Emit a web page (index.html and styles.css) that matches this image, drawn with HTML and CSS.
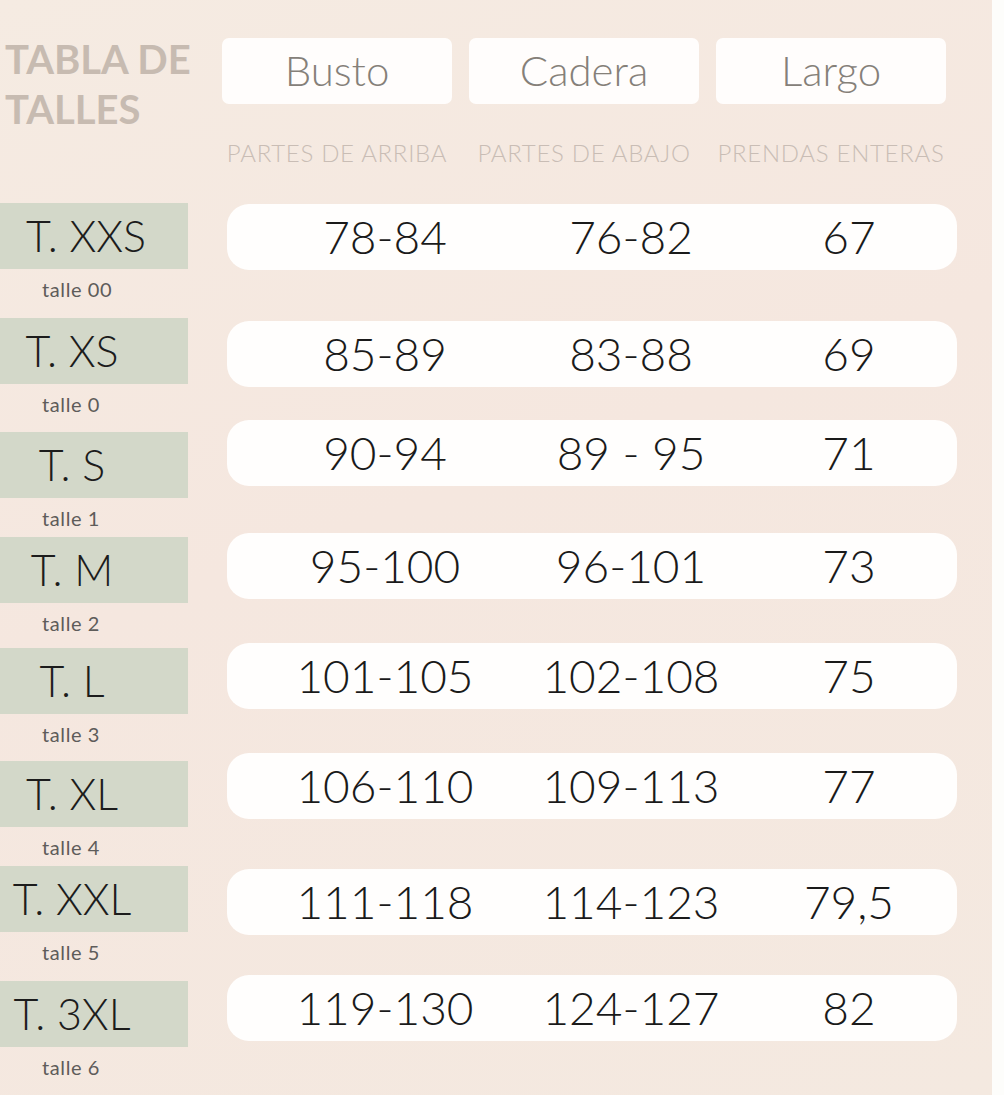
FILE: index.html
```html
<!DOCTYPE html>
<html lang="es">
<head>
<meta charset="utf-8">
<title>Tabla de talles</title>
<link rel="stylesheet" href="styles.css">
</head>
<body>
<div class="sheet">
  <div class="head">
    <h1 class="title">TABLA DE<br>TALLES</h1>
    <div class="hbox">Busto</div>
    <div class="hbox">Cadera</div>
    <div class="hbox">Largo</div>
    <div class="sub">PARTES DE ARRIBA</div>
    <div class="sub">PARTES DE ABAJO</div>
    <div class="sub">PRENDAS ENTERAS</div>
  </div>

  <div class="rows">
    <div class="row">
      <div class="label"><div class="size wide">T. XXS</div><div class="talle">talle 00</div></div>
      <div class="pill"><span>78-84</span><span>76-82</span><span>67</span></div>
    </div>
    <div class="row">
      <div class="label"><div class="size">T. XS</div><div class="talle">talle 0</div></div>
      <div class="pill"><span>85-89</span><span>83-88</span><span>69</span></div>
    </div>
    <div class="row">
      <div class="label"><div class="size">T. S</div><div class="talle">talle 1</div></div>
      <div class="pill"><span>90-94</span><span>89 - 95</span><span>71</span></div>
    </div>
    <div class="row">
      <div class="label"><div class="size">T. M</div><div class="talle">talle 2</div></div>
      <div class="pill"><span>95-100</span><span>96-101</span><span>73</span></div>
    </div>
    <div class="row">
      <div class="label"><div class="size">T. L</div><div class="talle">talle 3</div></div>
      <div class="pill"><span>101-105</span><span>102-108</span><span>75</span></div>
    </div>
    <div class="row">
      <div class="label"><div class="size">T. XL</div><div class="talle">talle 4</div></div>
      <div class="pill"><span>106-110</span><span>109-113</span><span>77</span></div>
    </div>
    <div class="row">
      <div class="label"><div class="size">T. XXL</div><div class="talle">talle 5</div></div>
      <div class="pill"><span>111-118</span><span>114-123</span><span>79,5</span></div>
    </div>
    <div class="row">
      <div class="label"><div class="size">T. 3XL</div><div class="talle">talle 6</div></div>
      <div class="pill"><span>119-130</span><span>124-127</span><span>82</span></div>
    </div>
  </div>
</div>
</body>
</html>
```

FILE: styles.css
```css
* { box-sizing: border-box; }

html, body {
  margin: 0;
  padding: 0;
  background: #fdfdfb;
}

body {
  width: 1004px;
  height: 1095px;
  overflow: hidden;
  font-family: Lato, "Open Sans", "Liberation Sans", sans-serif;
  font-weight: 300;
}

.sheet {
  width: 992px;
  height: 1095px;
  background: linear-gradient(160deg, #f5ebe2 0%, #f5e7df 45%, #f4e9e0 100%);
  padding-top: 34px;
}

/* ---------- header ---------- */
.head {
  display: grid;
  grid-template-columns: 205px 230px 230px 230px;
  grid-template-rows: auto auto;
  column-gap: 17px;
}

.title {
  grid-row: 1 / span 2;
  grid-column: 1;
  margin: 0;
  padding-left: 5px;
  font-size: 40px;
  line-height: 50px;
  font-weight: 700;
  color: #c7bbb1;
  white-space: nowrap;
}

.hbox {
  margin-top: 4px;
  height: 66px;
  background: #fffdfc;
  border-radius: 7px;
  display: flex;
  align-items: center;
  justify-content: center;
  font-size: 42px;
  color: #858079;
  padding-bottom: 2px;
}

.head .hbox:nth-child(2) { grid-column: 2; grid-row: 1; }
.head .hbox:nth-child(3) { grid-column: 3; grid-row: 1; }
.head .hbox:nth-child(4) { grid-column: 4; grid-row: 1; }

.sub {
  grid-row: 2;
  margin-top: 37px;
  line-height: 24px;
  height: 24px;
  text-align: center;
  font-size: 24px;
  color: #c9bdb5;
  white-space: nowrap;
  letter-spacing: 0.7px;
}
.head .sub:nth-child(5) { grid-column: 2; }
.head .sub:nth-child(6) { grid-column: 3; }
.head .sub:nth-child(7) { grid-column: 4; }

/* ---------- rows ---------- */
.rows {
  display: flex;
  flex-direction: column;
}

.row {
  display: flex;
  align-items: flex-start;
}

.label {
  width: 188px;
  flex: none;
}

.size {
  height: 66px;
  background: #d3d8c9;
  display: flex;
  align-items: center;
  justify-content: center;
  padding-right: 44px;
  font-size: 43px;
  color: #1c1c1c;
  padding-bottom: 2px;
}
.size.wide { padding-right: 16px; }

.talle {
  padding-left: 42px;
  margin-top: 8px;
  font-size: 20px;
  line-height: 24px;
  font-weight: 400;
  color: #5e5c5a;
  letter-spacing: 0.6px;
}

.pill {
  margin-left: 39px;
  width: 730px;
  height: 66px;
  flex: none;
  background: #fffefd;
  border-radius: 22px;
  display: grid;
  grid-template-columns: 236px 256px 180px;
  padding-left: 40px;
  align-items: center;
  font-size: 46px;
  color: #1a1a1a;
  padding-bottom: 2px;
}
.pill span {
  text-align: center;
  white-space: nowrap;
}

/* vertical rhythm of the original chart */
.row:nth-child(1) { margin-top: 38px; }
.row:nth-child(1) .pill { margin-top: 1px; }
.row:nth-child(2) { margin-top: 17px; }
.row:nth-child(2) .pill { margin-top: 3px; }
.row:nth-child(3) { margin-top: 16px; }
.row:nth-child(3) .pill { margin-top: -12px; }
.row:nth-child(4) { margin-top: 7px; }
.row:nth-child(4) .pill { margin-top: -4px; }
.row:nth-child(5) { margin-top: 13px; }
.row:nth-child(5) .pill { margin-top: -5px; }
.row:nth-child(6) { margin-top: 15px; }
.row:nth-child(6) .pill { margin-top: -8px; }
.row:nth-child(7) { margin-top: 7px; }
.row:nth-child(7) .pill { margin-top: 3px; }
.row:nth-child(8) { margin-top: 17px; }
.row:nth-child(8) .pill { margin-top: -6px; }
```
